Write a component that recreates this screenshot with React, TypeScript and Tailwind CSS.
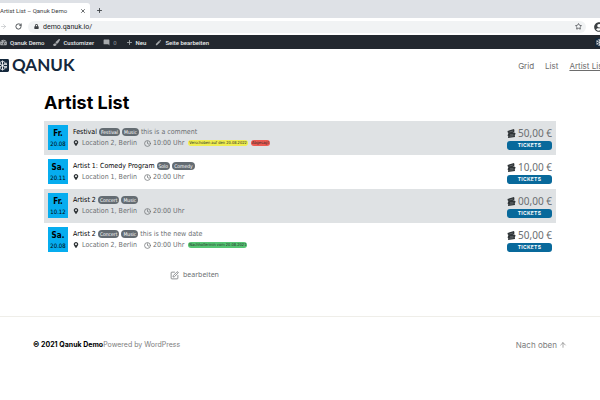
import React from 'react';
import {
  ArrowRight,
  ArrowUp,
  Clock,
  Plus,
  RotateCw,
  SquarePen,
  Star,
  X,
} from 'lucide-react';
import { FaLock, FaMapMarkerAlt, FaUserCircle, FaPaintBrush, FaTachometerAlt } from 'react-icons/fa';
import { MdModeEdit, MdModeComment } from 'react-icons/md';

type Note = { text: string; color: string };

type EventItem = {
  day: string;
  date: string;
  title: string;
  tags: string[];
  comment?: string;
  location: string;
  time: string;
  notes: Note[];
  price: string;
};

const events: EventItem[] = [
  {
    day: 'Fr.',
    date: '20.08',
    title: 'Festival',
    tags: ['Festival', 'Music'],
    comment: 'this is a comment',
    location: 'Location 2, Berlin',
    time: '10:00 Uhr',
    notes: [
      { text: 'Verschoben auf den 20.08.2022', color: 'bg-[#f0ee50]' },
      { text: 'Abgesagt', color: 'bg-[#ee5a52]' },
    ],
    price: '50,00 €',
  },
  {
    day: 'Sa.',
    date: '20.11',
    title: 'Artist 1: Comedy Program',
    tags: ['Solo', 'Comedy'],
    location: 'Location 1, Berlin',
    time: '20:00 Uhr',
    notes: [],
    price: '10,00 €',
  },
  {
    day: 'Fr.',
    date: '10.12',
    title: 'Artist 2',
    tags: ['Concert', 'Music'],
    location: 'Location 1, Berlin',
    time: '20:00 Uhr',
    notes: [],
    price: '00,00 €',
  },
  {
    day: 'Sa.',
    date: '20.08',
    title: 'Artist 2',
    tags: ['Concert', 'Music'],
    comment: 'this is the new date',
    location: 'Location 2, Berlin',
    time: '20:00 Uhr',
    notes: [{ text: 'Nachholtermin vom 20.08.2021', color: 'bg-[#55c573]' }],
    price: '50,00 €',
  },
];

function TicketIcon() {
  return (
    <svg viewBox="0 0 18 18" className="h-[9px] w-[9px] shrink-0" aria-hidden="true">
      <path d="M1 4 14 0l1 3-1 1.500 2 2L4 10 3 8 1.500 7z" fill="#2f3437" />
      <path d="M3 8h14l-.5 3-1 1 .5 4-14 2 .5-4-1.500-1z" fill="#2f3437" />
      <path d="M5 6l7-2M6 11.500h7M5 14.500l8-1" stroke="#8b9093" strokeWidth="1" />
    </svg>
  );
}

function Snowflake({ className }: { className: string }) {
  return (
    <svg viewBox="0 0 28 28" className={className} aria-hidden="true">
      <rect width="28" height="28" rx="3" fill="#14283c" />
      <g stroke="#fff" strokeWidth="1.800" fill="none" strokeLinecap="round">
        <path d="M14 4v20M5 9l18 10M5 19 23 9" />
        <path d="M11 5l3 3 3-3M11 23l3-3 3 3M5 12l4-1V7M23 12l-4-1V7M5 16l4 1v4M23 16l-4 1v4" />
      </g>
    </svg>
  );
}

function BrowserBar() {
  return (
    <div className="font-[Roboto,sans-serif] text-[#3c4043]">
      <div className="flex h-[18px] items-end bg-[#dee1e6]">
        <div className="flex h-[15px] w-[90px] items-center justify-between rounded-tr-[3px] bg-white pr-1">
          <span className="whitespace-nowrap text-[6px]">Artist List – Qanuk Demo</span>
          <button aria-label="Close tab">
            <X size={6} strokeWidth={3} />
          </button>
        </div>
        <button aria-label="New tab" className="mb-1 ml-1.5">
          <Plus size={7} strokeWidth={3} />
        </button>
      </div>
      <div className="flex h-[17px] items-center bg-white">
        <button aria-label="Forward" className="text-[#b4b7ba]">
          <ArrowRight size={7} />
        </button>
        <button aria-label="Reload" className="ml-2">
          <RotateCw size={7} strokeWidth={3} />
        </button>
        <label className="ml-1.5 flex h-3 flex-1 items-center gap-1 rounded-full bg-[#f1f3f4] pl-1.5 pr-1">
          <FaLock size={5} className="shrink-0" />
          <input
            aria-label="Address"
            defaultValue="demo.qanuk.io/"
            className="h-3 min-w-0 flex-1 bg-transparent text-[7px] leading-3 text-[#202124] outline-none"
          />
          <Star size={7} strokeWidth={2.500} />
        </label>
        <button aria-label="Profile" className="-mr-1 ml-2">
          <FaUserCircle size={10} />
        </button>
      </div>
    </div>
  );
}

function AdminBar() {
  return (
    <nav className="flex h-[14px] items-center gap-[9px] overflow-hidden bg-[#23282f] font-[Roboto,sans-serif] text-[6px] font-medium text-[#e8eaec]">
      <a href="#dashboard" className="flex items-center gap-[3px]">
        <FaTachometerAlt size={7} className="text-[#a7aaad]" />
        Qanuk Demo
      </a>
      <a href="#customizer" className="flex items-center gap-[3px]">
        <FaPaintBrush size={7} className="text-[#a7aaad]" />
        Customizer
      </a>
      <a href="#comments" className="flex items-center gap-[3px] text-[#7b8086]">
        <MdModeComment size={7} className="text-[#a7aaad]" />
        0
      </a>
      <a href="#new" className="flex items-center gap-[3px]">
        <Plus size={7} strokeWidth={3} className="text-[#a7aaad]" />
        Neu
      </a>
      <a href="#edit" className="flex items-center gap-[3px]">
        <MdModeEdit size={7} className="text-[#a7aaad]" />
        Seite bearbeiten
      </a>
      <Snowflake className="-mr-1 ml-auto h-[9px] w-[9px]" />
    </nav>
  );
}

function EventRow({ event }: { event: EventItem }) {
  return (
    <li className="flex h-[34px] items-center px-1 pb-px odd:bg-[#dfe2e4]">
      <div className="flex h-[25px] w-5 shrink-0 flex-col items-center justify-center bg-[#06adef] text-black">
        <span className="text-[8px] font-bold leading-[11px]">{event.day}</span>
        <span className="text-[6px] leading-[9px]">{event.date}</span>
      </div>
      <div className="ml-[5px] min-w-0 flex-1 whitespace-nowrap text-[7px] leading-[11px] text-[#6b6f72]">
        <div className="flex items-center gap-0.5">
          <h2 className="text-black">{event.title}</h2>
          {event.tags.map((tag) => (
            <span key={tag} className="rounded-full bg-[#646c72] px-0.5 text-[5px] leading-[8px] text-white">
              {tag}
            </span>
          ))}
          {event.comment && <span>{event.comment}</span>}
        </div>
        <div className="flex items-center">
          <span className="flex items-center gap-[3px]">
            <FaMapMarkerAlt size={6} className="text-[#2f3437]" />
            {event.location}
          </span>
          <span className="ml-[7px] flex items-center gap-0.5">
            <Clock size={7} strokeWidth={2.500} />
            {event.time}
          </span>
          <span className="ml-1 flex gap-[3px]">
            {event.notes.map((note) => (
              <span
                key={note.text}
                className={`rounded-full px-px text-[4px] leading-[6px] text-[#2b2b2b] ${note.color}`}
              >
                {note.text}
              </span>
            ))}
          </span>
        </div>
      </div>
      <div className="flex w-[45px] flex-col">
        <div className="flex items-center justify-between whitespace-nowrap font-['Noto_Sans',sans-serif] text-[10px] leading-[15px] text-[#6b6f72]">
          <TicketIcon />
          {event.price}
        </div>
        <button className="h-[9px] rounded-[3px] bg-[#08699b] font-[Inter,sans-serif] text-[5px] font-bold leading-[9px] tracking-wider text-white">
          TICKETS
        </button>
      </div>
    </li>
  );
}

export default function App() {
  return (
    <div className="min-h-screen overflow-hidden bg-white font-[Inter,sans-serif]">
      <BrowserBar />
      <AdminBar />
      <header className="flex h-[34px] items-center justify-between overflow-hidden">
        <a href="#home" className="flex items-center gap-[3px] pb-0.5 font-[Lato,sans-serif] text-[17px] font-bold leading-5 text-[#14283c]">
          <Snowflake className="-ml-1 h-[13px] w-[13px]" />
          QANUK
        </a>
        <nav className="-mr-[5px] flex gap-[11px] whitespace-nowrap text-[8px] text-[#6d6d6d]">
          <a href="#grid">Grid</a>
          <a href="#list">List</a>
          <a href="#artist-list" className="underline">Artist List</a>
        </nav>
      </header>
      <main className="px-11">
        <h1 className="pt-2 text-[18px] font-bold leading-6 text-black">Artist List</h1>
        <ul className="mt-1.5 font-['DejaVu_Sans_Condensed','Noto_Sans',sans-serif]">
          {events.map((event, i) => (
            <EventRow key={i} event={event} />
          ))}
        </ul>
        <a
          href="#edit-page"
          className="ml-[126px] mt-3 flex w-fit items-center gap-1 font-['Noto_Sans',sans-serif] text-[7px] leading-3 text-[#6b6f72]"
        >
          <SquarePen size={9} />
          bearbeiten
        </a>
      </main>
      <footer className="mt-[35px] flex items-center justify-between border-t border-[#efeee9] px-[33px] pt-[22px] text-[7px] leading-3 text-[#7d7d7d]">
        <p>
          <a href="#home" className="font-bold text-black">© 2021 Qanuk Demo</a>
          <a href="#wordpress">Powered by WordPress</a>
        </p>
        <a href="#top" className="flex items-center gap-0.5 text-[8px]">
          Nach oben
          <ArrowUp size={8} />
        </a>
      </footer>
    </div>
  );
}
